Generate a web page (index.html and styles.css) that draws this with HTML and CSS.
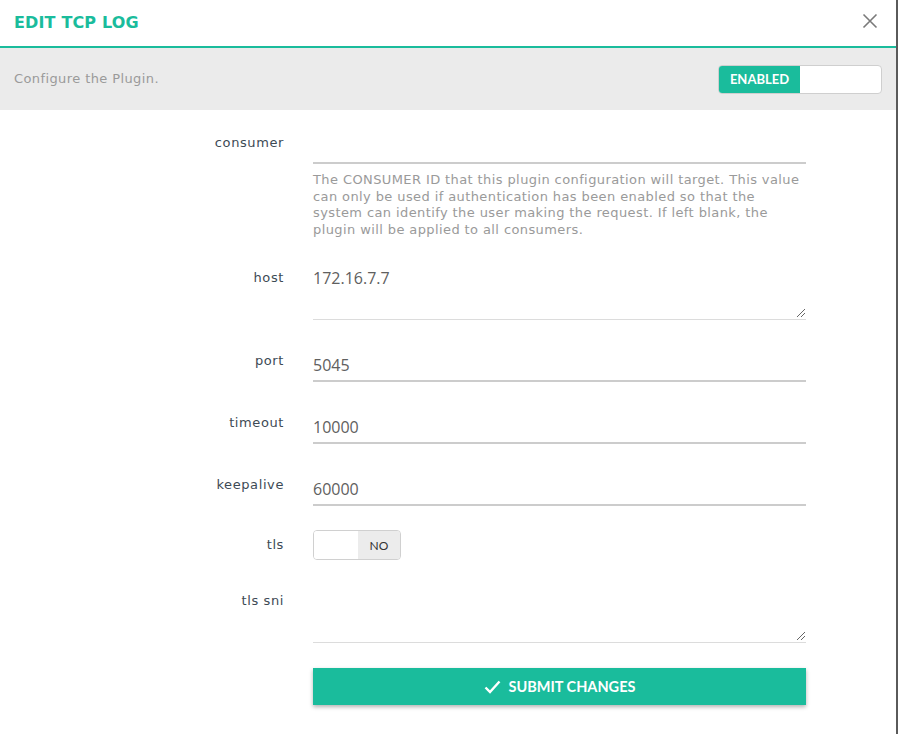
FILE: index.html
```html
<!DOCTYPE html>
<html>
<head>
<meta charset="utf-8">
<link rel="stylesheet" href="styles.css">
</head>
<body>
<div class="modal">
  <div class="modal-header">
    <h1 class="title">EDIT TCP LOG</h1>
    <button class="close" aria-label="Close">
      <svg width="16" height="16" viewBox="0 0 16 16"><path d="M1.5 1.5 L14.5 14.5 M14.5 1.5 L1.5 14.5" stroke="#7a7a7a" stroke-width="1.6" fill="none"/></svg>
    </button>
  </div>
  <div class="subheader">
    <span class="sub-text">Configure the Plugin.</span>
    <div class="enable-toggle"><span class="on">ENABLED</span><span class="off"></span></div>
  </div>
  <form class="form">
    <div class="row r-consumer">
      <label class="lbl">consumer</label>
      <div class="field">
        <div class="input"></div>
        <p class="help">The CONSUMER ID that this plugin configuration will target. This value can only be used if authentication has been enabled so that the system can identify the user making the request. If left blank, the plugin will be applied to all consumers.</p>
      </div>
    </div>
    <div class="row r-host">
      <label class="lbl">host</label>
      <div class="field"><div class="textarea">172.16.7.7<span class="grip"></span></div></div>
    </div>
    <div class="row">
      <label class="lbl">port</label>
      <div class="field"><div class="input">5045</div></div>
    </div>
    <div class="row">
      <label class="lbl">timeout</label>
      <div class="field"><div class="input">10000</div></div>
    </div>
    <div class="row">
      <label class="lbl">keepalive</label>
      <div class="field"><div class="input">60000</div></div>
    </div>
    <div class="row r-tls">
      <label class="lbl">tls</label>
      <div class="field"><div class="yn"><span class="blank"></span><span class="no">NO</span></div></div>
    </div>
    <div class="row r-sni">
      <label class="lbl">tls sni</label>
      <div class="field"><div class="textarea"><span class="grip"></span></div></div>
    </div>
    <div class="row r-submit">
      <span></span>
      <div class="field">
        <button type="button" class="submit">
          <svg width="17" height="14" viewBox="0 0 17 14"><path d="M1.5 7.5 L6 12 L15.5 1.5" stroke="#fff" stroke-width="2.4" fill="none"/></svg>
          SUBMIT CHANGES
        </button>
      </div>
    </div>
  </form>
</div>
</body>
</html>
```
FILE: styles.css
```css
html, body {
  margin: 0;
  padding: 0;
  background: #5a5a5a;
  height: 734px;
  overflow: hidden;
}
.modal {
  width: 896px;
  height: 734px;
  background: #fff;
  font-family: "DejaVu Sans", "Liberation Sans", sans-serif;
}
.modal-header {
  height: 46px;
  border-bottom: 2px solid #1abc9c;
  display: flex;
  align-items: center;
  justify-content: space-between;
  padding: 0 18px 0 14px;
}
.title {
  margin: 0 0 2px;
  font-size: 16px;
  font-weight: 700;
  color: #1abc9c;
  letter-spacing: 0.15px;
}
.close {
  border: 0;
  background: none;
  padding: 0;
  width: 16px;
  height: 16px;
  margin-top: -4px;
  display: flex;
}
.subheader {
  height: 62px;
  background: #ebebeb;
  display: flex;
  align-items: center;
  justify-content: space-between;
  padding: 0 14px;
}
.sub-text {
  font-size: 13px;
  letter-spacing: 0.4px;
  color: #9a9a9a;
  margin-top: -2px;
}
.enable-toggle {
  width: 162px;
  height: 27px;
  border: 1px solid #cfcfcf;
  border-radius: 4px;
  background: #fff;
  display: flex;
  overflow: hidden;
}
.enable-toggle .on {
  width: 81px;
  background: #1abc9c;
  color: #fff;
  font-family: Lato, "Liberation Sans", sans-serif;
  font-weight: 700;
  font-size: 13px;
  display: flex;
  align-items: center;
  justify-content: center;
}
.form {
  padding-top: 22px;
}
.row {
  display: grid;
  grid-template-columns: 284px 493px;
  column-gap: 29px;
  margin-bottom: 30px;
}
.lbl {
  text-align: right;
  font-size: 13px;
  letter-spacing: 0.6px;
  line-height: 14px;
  padding-top: 4px;
  color: #3d4a55;
}
.input {
  height: 30px;
  border-bottom: 2px solid #cccccc;
  font-family: "Open Sans", "Liberation Sans", sans-serif;
  font-size: 16px;
  line-height: 30px;
  color: #606060;
}
.help {
  margin: 8px 0 0;
  font-size: 13px;
  letter-spacing: 0.4px;
  line-height: 16.5px;
  color: #9a9a9a;
}
.r-consumer { margin-bottom: 29px; }
.textarea {
  position: relative;
  border-bottom: 1px solid #dcdcdc;
  font-family: "Open Sans", "Liberation Sans", sans-serif;
  font-size: 16px;
  line-height: 18px;
  padding-top: 2px;
  box-sizing: border-box;
  height: 53px;
  color: #606060;
}
.grip {
  position: absolute;
  right: 1px;
  bottom: 2px;
  width: 8px;
  height: 8px;
  background:
    linear-gradient(135deg, transparent 45%, #666 45%, #666 55%, transparent 55%, transparent 70%, #666 70%, #666 80%, transparent 80%);
}
.r-tls { margin-bottom: 30px; margin-top: -6px; align-items: center; }
.r-tls .lbl { padding-top: 0; }
.yn {
  width: 86px;
  height: 28px;
  border: 1px solid #d0d0d0;
  border-radius: 4px;
  display: flex;
  overflow: hidden;
}
.yn .blank { width: 44px; background: #fff; }
.yn .no {
  flex: 1;
  background: #ececec;
  font-family: Lato, "Liberation Sans", sans-serif;
  font-size: 12px;
  color: #333;
  display: flex;
  align-items: center;
  justify-content: center;
}
.r-sni { margin-bottom: 25px; }
.submit {
  width: 493px;
  height: 37px;
  border: 0;
  background: #1abc9c;
  color: #fff;
  font-family: Lato, "Liberation Sans", sans-serif;
  font-weight: 700;
  font-size: 14.5px;
  display: flex;
  align-items: center;
  justify-content: center;
  gap: 8px;
  box-shadow: 0 2px 4px rgba(0,0,0,0.3);
}
```
